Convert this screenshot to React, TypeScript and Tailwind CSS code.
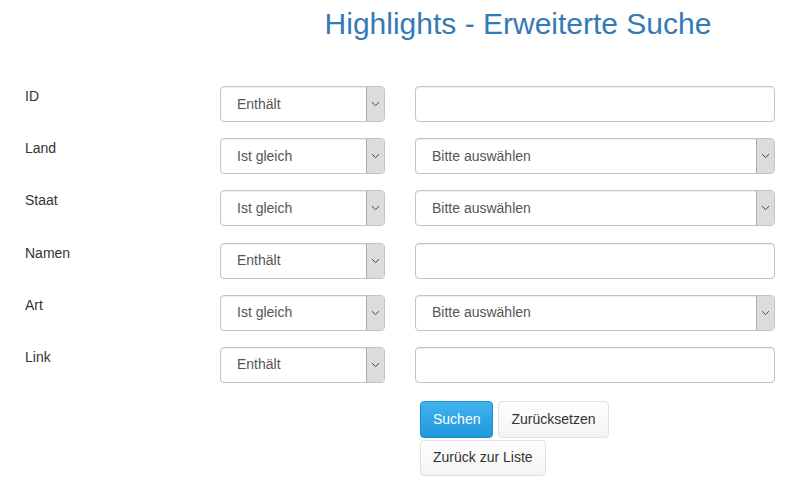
import React from 'react'

type Row = { label: string; op: string; kind: 'text' | 'select' }

const rows: Row[] = [
  { label: 'ID', op: 'Enthält', kind: 'text' },
  { label: 'Land', op: 'Ist gleich', kind: 'select' },
  { label: 'Staat', op: 'Ist gleich', kind: 'select' },
  { label: 'Namen', op: 'Enthält', kind: 'text' },
  { label: 'Art', op: 'Ist gleich', kind: 'select' },
  { label: 'Link', op: 'Enthält', kind: 'text' },
]

function Arrow() {
  return (
    <div className="flex h-full w-[18px] shrink-0 items-center justify-center rounded-r-[3px] border-l border-[#aaa] bg-[#dcdcdc]">
      <svg width="9" height="6" viewBox="0 0 9 6" fill="none">
        <path d="M1 1.2L4.5 4.6L8 1.2" stroke="#444" strokeWidth="1" />
      </svg>
    </div>
  )
}

function SelectBox({ value, className }: { value: string; className: string }) {
  return (
    <div
      className={`flex h-[36px] items-center rounded-[4px] border border-[#c4c4c4] bg-white shadow-[inset_0_1px_1px_rgba(0,0,0,0.075)] ${className}`}
    >
      <span className="flex-1 pl-[16px] text-[14px] text-[#555]">{value}</span>
      <Arrow />
    </div>
  )
}

export default function App() {
  return (
    <div className="min-h-[482px] bg-white font-['Liberation_Sans',Arial,sans-serif] text-[14px] text-[#333]">
      {/* Titel */}
      <h1 className="pl-[242px] pt-[7px] text-center text-[30px] font-normal leading-[33px] text-[#337ab7]">
        Highlights - Erweiterte Suche
      </h1>

      {/* Suchfelder */}
      <div className="mt-[46px] flex flex-col gap-[16.2px] pl-[25px]">
        {rows.map((row) => (
          <div key={row.label} className="flex items-start">
            <label className="w-[195px] leading-[20px]">{row.label}</label>
            <SelectBox value={row.op} className="w-[165px]" />
            {row.kind === 'select' ? (
              <SelectBox value="Bitte auswählen" className="ml-[30px] w-[360px]" />
            ) : (
              <div className="ml-[30px] h-[36px] w-[360px] rounded-[4px] border border-[#c4c4c4] bg-white shadow-[inset_0_1px_1px_rgba(0,0,0,0.075)]" />
            )}
          </div>
        ))}
      </div>

      {/* Buttons */}
      <div className="mt-[18px] flex flex-col gap-[2px] pl-[420px]">
        <div className="flex gap-[5px]">
          <button className="h-[37px] rounded-[4px] border border-[#1c8fd0] bg-gradient-to-b from-[#40b3ee] to-[#1f98dc] px-[12px] text-[14px] text-white">
            Suchen
          </button>
          <button className="h-[37px] rounded-[4px] border border-[#e0e0e0] bg-gradient-to-b from-white to-[#f3f3f3] px-[12px] text-[14px] text-[#333]">
            Zurücksetzen
          </button>
        </div>
        <div className="flex">
          <button className="h-[36px] rounded-[4px] border border-[#e0e0e0] bg-gradient-to-b from-white to-[#f3f3f3] px-[12px] text-[14px] text-[#333]">
            Zurück zur Liste
          </button>
        </div>
      </div>
    </div>
  )
}
